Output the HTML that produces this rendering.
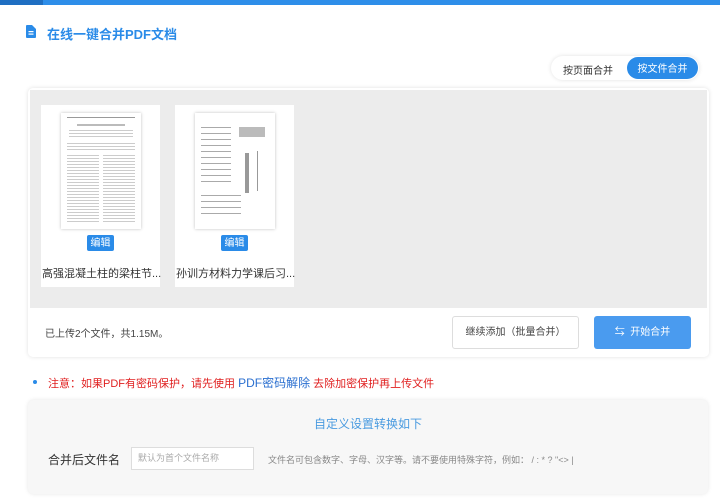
<!DOCTYPE html>
<html><head><meta charset="utf-8"><style>
*{margin:0;padding:0;box-sizing:border-box}
body{width:720px;height:501px;overflow:hidden;background:#fff;font-family:"Liberation Sans","Noto Sans CJK SC",sans-serif;position:relative;color:#333}
.a{position:absolute}
.card{background:#fff;box-shadow:0 0 4px rgba(0,0,0,.12);}
.doc{position:absolute;left:20px;top:8px;width:80px;height:116px;background:#fff;box-shadow:0 0 3px rgba(0,0,0,.25)}
.l{position:absolute;height:1px;background:#aaa}
.edit{position:absolute;left:46px;top:130px;width:27px;height:16px;background:#2a8be8;color:#fff;font-size:10px;line-height:17px;text-align:center;border-radius:2px}
.nm{position:absolute;left:1px;top:160px;font-size:11px;color:#333;white-space:nowrap}
</style></head><body>
<div class="a" style="left:0;top:0;width:720px;height:5px;background:#2e8ee9"></div>
<div class="a" style="left:0;top:0;width:43px;height:5px;background:#1f6fc2"></div>
<svg class="a" style="left:26px;top:25px" width="10" height="13"><path d="M0 1a1 1 0 0 1 1-1h5l4 4v8a1 1 0 0 1-1 1H1a1 1 0 0 1-1-1z" fill="#2a8be8"/><rect x="2.5" y="6" width="5" height="1.2" fill="#fff"/><rect x="2.5" y="8.5" width="5" height="1.2" fill="#fff"/></svg>
<div class="a" style="left:47px;top:24px;font-size:13px;font-weight:bold;color:#2a8be8">在线一键合并PDF文档</div>
<div class="a card" style="left:551px;top:56px;width:148px;height:24px;border-radius:12px"></div>
<div class="a" style="left:563px;top:62px;font-size:10px;color:#333">按页面合并</div>
<div class="a" style="left:627px;top:57px;width:71px;height:22px;border-radius:11px;background:#2a8be8;color:#fff;font-size:10px;line-height:22px;text-align:center;padding-top:2px">按文件合并</div>
<div class="a card" style="left:28px;top:88px;width:681px;height:269px;border-radius:5px;overflow:hidden">
<div class="a" style="left:2px;top:2px;width:677px;height:218px;background:#ececec"></div>
<div class="a" style="left:13px;top:17px;width:119px;height:182px;background:#fff">
<div class="doc">
<div class="l" style="left:6px;top:4px;width:68px;background:#999"></div>
<div class="l" style="left:16px;top:11px;width:48px;height:2px;background:#bbb"></div>
<div class="l" style="left:8px;top:17px;width:64px;height:8px;background:repeating-linear-gradient(#ccc 0 1px,#fff 1px 3px)"></div>
<div class="l" style="left:6px;top:30px;width:68px;height:8px;background:repeating-linear-gradient(#ccc 0 1px,#fff 1px 3px)"></div>
<div class="l" style="left:6px;top:42px;width:32px;height:68px;background:repeating-linear-gradient(#ccc 0 1px,#fff 1px 3px)"></div>
<div class="l" style="left:42px;top:42px;width:32px;height:68px;background:repeating-linear-gradient(#ccc 0 1px,#fff 1px 3px)"></div>
</div>
<div class="edit">编辑</div><div class="nm">高强混凝土柱的梁柱节...</div></div>
<div class="a" style="left:147px;top:17px;width:119px;height:182px;background:#fff">
<div class="doc">
<div class="l" style="left:6px;top:14px;width:30px;height:60px;background:repeating-linear-gradient(#aaa 0 1px,#fff 1px 6px)"></div>
<div class="l" style="left:44px;top:14px;width:26px;height:10px;background:#bbb"></div>
<div class="l" style="left:50px;top:40px;width:4px;height:40px;background:#999"></div>
<div class="l" style="left:62px;top:38px;width:1px;height:40px;background:#999"></div>
<div class="l" style="left:6px;top:82px;width:40px;height:22px;background:repeating-linear-gradient(#aaa 0 1px,#fff 1px 6px)"></div>
</div>
<div class="edit">编辑</div><div class="nm">孙训方材料力学课后习...</div></div>
<div class="a" style="left:17px;top:237px;font-size:10px;color:#444">已上传2个文件，共1.15M。</div>
<div class="a" style="left:424px;top:228px;width:127px;height:33px;border:1px solid #ddd;border-radius:3px;font-size:10px;line-height:31px;text-align:center;color:#444">继续添加（批量合并）</div>
<div class="a" style="left:566px;top:228px;width:97px;height:33px;background:#4a9bef;border-radius:3px;font-size:10px;line-height:33px;text-align:center;color:#fff">⇆&nbsp; 开始合并</div>
</div>
<div class="a" style="left:33px;top:380px;width:4px;height:4px;border-radius:2px;background:#2a8be8"></div>
<div class="a" style="left:48px;top:374px;font-size:11px;color:#e02020;white-space:nowrap">注意：如果PDF有密码保护，请先使用 <span style="color:#2a6fd0;font-size:12px">PDF密码解除</span> 去除加密保护再上传文件</div>
<div class="a" style="left:28px;top:400px;width:680px;height:94px;background:#f7f7f7;border-radius:6px;box-shadow:0 0 4px rgba(0,0,0,.1)"></div>
<div class="a" style="left:0;top:415px;width:736px;text-align:center;font-size:12px;color:#4a9be0">自定义设置转换如下</div>
<div class="a" style="left:48px;top:451px;font-size:12px;color:#333">合并后文件名</div>
<div class="a" style="left:131px;top:447px;width:123px;height:23px;border:1px solid #ddd;background:#fff;font-size:9px;color:#aaa;line-height:21px;padding-left:6px">默认为首个文件名称</div>
<div class="a" style="left:268px;top:453px;font-size:9px;color:#888;white-space:nowrap">文件名可包含数字、字母、汉字等。请不要使用特殊字符，例如： / : * ? "<> |</div>
</body></html>
